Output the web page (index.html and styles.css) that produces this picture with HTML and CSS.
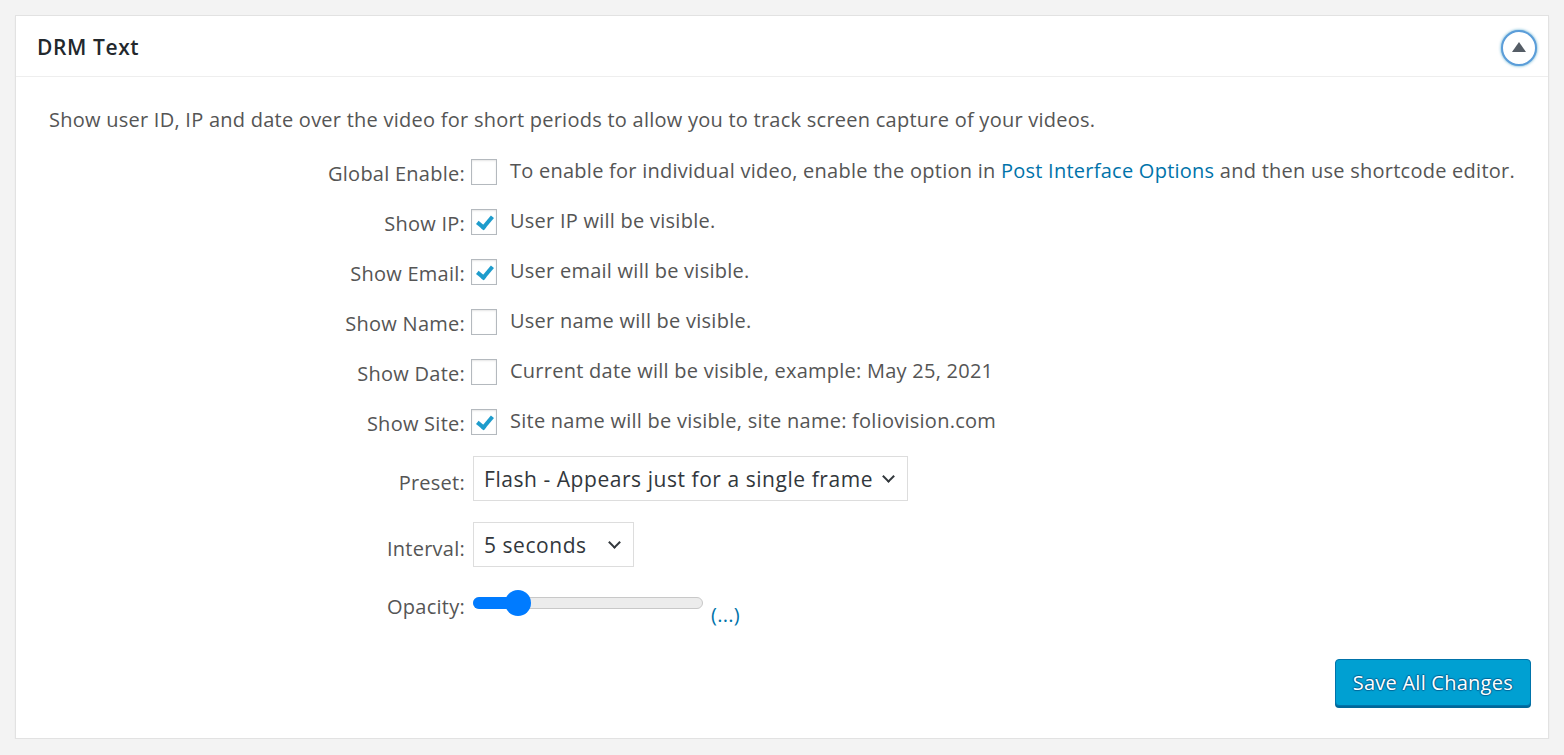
FILE: index.html
```html
<!DOCTYPE html>
<html lang="en">
<head>
    <meta charset="UTF-8">
    <title>DRM Text</title>
    <link rel="stylesheet" href="styles.css">
</head>
<body>
    <div class="postbox">
        <div class="postbox-header">
            <h2>DRM Text</h2>
            <button class="handle-toggle" aria-label="Toggle panel"><span class="arrow"></span></button>
        </div>

        <div class="inside">
            <p class="intro">Show user ID, IP and date over the video for short periods to allow you to track screen capture of your videos.</p>

            <div class="form-row check-row">
                <label class="row-label">Global Enable:</label>
                <span class="checkbox"></span>
                <span class="desc">To enable for individual video, enable the option in <a href="#">Post Interface Options</a> and then use shortcode editor.</span>
            </div>
            <div class="form-row check-row">
                <label class="row-label">Show IP:</label>
                <span class="checkbox checked"></span>
                <span class="desc">User IP will be visible.</span>
            </div>
            <div class="form-row check-row">
                <label class="row-label">Show Email:</label>
                <span class="checkbox checked"></span>
                <span class="desc">User email will be visible.</span>
            </div>
            <div class="form-row check-row">
                <label class="row-label">Show Name:</label>
                <span class="checkbox"></span>
                <span class="desc">User name will be visible.</span>
            </div>
            <div class="form-row check-row">
                <label class="row-label">Show Date:</label>
                <span class="checkbox"></span>
                <span class="desc">Current date will be visible, example: May 25, 2021</span>
            </div>
            <div class="form-row check-row">
                <label class="row-label">Show Site:</label>
                <span class="checkbox checked"></span>
                <span class="desc">Site name will be visible, site name: foliovision.com</span>
            </div>

            <div class="form-row select-row preset-row">
                <label class="row-label">Preset:</label>
                <div class="select preset">Flash - Appears just for a single frame<span class="chevron"></span></div>
            </div>
            <div class="form-row select-row interval-row">
                <label class="row-label">Interval:</label>
                <div class="select interval">5 seconds<span class="chevron"></span></div>
            </div>
            <div class="form-row opacity-row">
                <label class="row-label">Opacity:</label>
                <div class="slider">
                    <div class="slider-fill"></div>
                    <div class="slider-thumb"></div>
                </div>
                <a href="#" class="more">(...)</a>
            </div>

            <div class="actions">
                <button class="button-primary">Save All Changes</button>
            </div>
        </div>
    </div>
</body>
</html>
```

FILE: styles.css
```css
body {
    margin: 0;
    padding: 15px 15px 0 15px;
    background-color: #f3f3f3;
    font-family: 'Open Sans', sans-serif;
    font-size: 20px;
    letter-spacing: 0.25px;
    color: #555;
}

.postbox {
    background-color: #fff;
    border: 1px solid #e2e2e2;
    box-shadow: 0 2px 2px rgba(0, 0, 0, 0.04);
    height: 724px;
    box-sizing: border-box;
}

.postbox-header {
    display: flex;
    align-items: center;
    justify-content: space-between;
    height: 60px;
    border-bottom: 1px solid #eee;
    padding: 0 11px 0 21px;
}

.postbox-header h2 {
    margin: 2px 0 0 0;
    font-size: 21px;
    font-weight: 600;
    color: #23282d;
    letter-spacing: 0.6px;
}

.handle-toggle {
    width: 36px;
    height: 36px;
    margin-top: 3px;
    border-radius: 50%;
    border: 2px solid #5b9dd9;
    box-shadow: 0 0 3px rgba(30, 140, 190, 0.8);
    background: #fff;
    padding: 0;
    display: flex;
    align-items: center;
    justify-content: center;
}

.arrow {
    width: 0;
    height: 0;
    border-left: 7px solid transparent;
    border-right: 7px solid transparent;
    border-bottom: 10px solid #555d66;
    margin-top: -2px;
}

.inside {
    padding: 28px 33px 0 33px;
}

.intro {
    margin: 0 0 12px 0;
    line-height: 30px;
}

.form-row {
    display: flex;
    align-items: center;
}

.row-label {
    width: 422px;
    text-align: right;
    padding-right: 6px;
    box-sizing: border-box;
    flex-shrink: 0;
}

.check-row {
    height: 50px;
}

.check-row .row-label {
    padding-top: 3px;
}

.checkbox {
    width: 26px;
    height: 26px;
    border: 1px solid #b4b9be;
    box-sizing: border-box;
    box-shadow: inset 0 1px 2px rgba(0, 0, 0, 0.1);
    margin-right: 13px;
    flex-shrink: 0;
    position: relative;
}

.checkbox.checked::after {
    content: '';
    position: absolute;
    left: 8px;
    top: 3px;
    width: 6px;
    height: 12px;
    border-right: 4px solid #1e9ccc;
    border-bottom: 4px solid #1e9ccc;
    transform: rotate(40deg);
}

.desc {
    margin-top: -4px;
}

a {
    color: #0073aa;
    text-decoration: none;
}

.select-row .row-label {
    padding-top: 8px;
}

.select {
    border: 1px solid #ddd;
    height: 45px;
    box-sizing: border-box;
    display: flex;
    align-items: center;
    padding: 0 14px 0 10px;
    font-size: 21px;
    letter-spacing: 0.55px;
    color: #32373c;
    margin-left: 2px;
}

.chevron {
    width: 7px;
    height: 7px;
    border-right: 2px solid #32373c;
    border-bottom: 2px solid #32373c;
    transform: rotate(45deg);
    margin-left: auto;
    margin-top: -4px;
}

.preset-row {
    margin-top: 9px;
}

.preset {
    width: 435px;
}

.interval-row {
    margin-top: 21px;
}

.interval {
    width: 161px;
}

.opacity-row {
    margin-top: 19px;
    align-items: flex-start;
}

.opacity-row .row-label {
    padding-top: 7px;
}

.slider {
    position: relative;
    width: 230px;
    height: 12px;
    margin: 11px 0 0 2px;
    background-color: #ececec;
    border: 1px solid #c8c8c8;
    border-radius: 6px;
    box-sizing: border-box;
}

.slider-fill {
    width: 44px;
    height: 12px;
    margin: -1px 0 0 -1px;
    background-color: #007bff;
    border-radius: 6px 0 0 6px;
}

.slider-thumb {
    position: absolute;
    left: 31px;
    top: -8px;
    width: 26px;
    height: 26px;
    border-radius: 50%;
    background-color: #007bff;
}

.more {
    margin: 15px 0 0 8px;
}

.actions {
    display: flex;
    justify-content: flex-end;
    margin: 31px -16px 0 0;
}

.button-primary {
    font-family: 'Open Sans', sans-serif;
    font-size: 20px;
    letter-spacing: 0.25px;
    color: #fff;
    background-color: #00a0d2;
    border: 1px solid #0073aa;
    border-radius: 4px;
    box-shadow: 0 2px 0 #006799;
    text-shadow: 0 -1px 1px #006799, 1px 0 1px #006799, 0 1px 1px #006799, -1px 0 1px #006799;
    height: 47px;
    padding: 0 17px;
}
```
